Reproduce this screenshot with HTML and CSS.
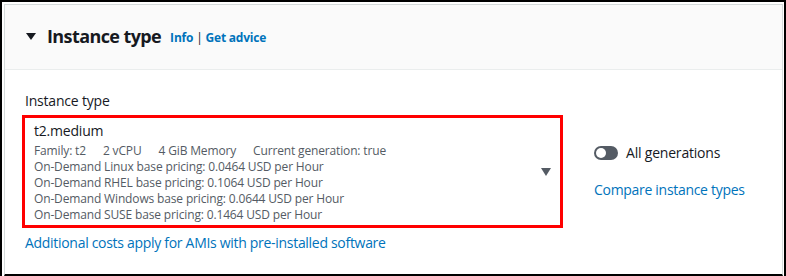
FILE: index.html
```html
<!DOCTYPE html>
<html lang="en">
<head>
    <meta charset="UTF-8">
    <title>Instance type</title>
    <link rel="stylesheet" href="styles.css">
</head>
<body>
    <div class="frame">
        <div class="panel">
            <div class="panel-header">
                <span class="caret-down"></span>
                <h2>Instance type</h2>
                <span class="header-links"><a href="#">Info</a> <span class="sep">|</span> <a href="#">Get advice</a></span>
            </div>

            <div class="panel-body">
                <div class="field-label">Instance type</div>
                <div class="field-row">
                    <div class="select-box">
                        <div class="select-text">
                            <div class="select-title">t2.medium</div>
                            <div class="select-meta">
                                <span>Family: t2</span>
                                <span>2 vCPU</span>
                                <span>4 GiB Memory</span>
                                <span>Current generation: true</span>
                            </div>
                            <div class="select-line">On-Demand Linux base pricing: 0.0464 USD per Hour</div>
                            <div class="select-line">On-Demand RHEL base pricing: 0.1064 USD per Hour</div>
                            <div class="select-line">On-Demand Windows base pricing: 0.0644 USD per Hour</div>
                            <div class="select-line">On-Demand SUSE base pricing: 0.1464 USD per Hour</div>
                        </div>
                        <span class="select-caret"></span>
                    </div>

                    <div class="side">
                        <label class="toggle-row">
                            <span class="toggle"><span class="knob"></span></span>
                            All generations
                        </label>
                        <a href="#" class="link">Compare instance types</a>
                    </div>
                </div>
                <a href="#" class="link extra">Additional costs apply for AMIs with pre-installed software</a>
            </div>
        </div>
    </div>
</body>
</html>
```

FILE: styles.css
```css
html, body {
    margin: 0;
    height: 100%;
}
body {
    font-family: 'Open Sans', sans-serif;
    color: #16191f;
    background-color: white;
}
a {
    color: #0073bb;
    text-decoration: none;
}
.frame {
    box-sizing: border-box;
    height: 276px;
    border: 2px solid #000;
    border-bottom: none;
    padding: 2px 1px 0 2px;
    display: flex;
}
.panel {
    flex: 1;
    border: 1px solid #d5dbdb;
    border-bottom: 2px solid #000;
}
.panel-header {
    height: 64px;
    background-color: #fafafa;
    border-bottom: 1px solid #eaeded;
    display: flex;
    align-items: center;
    padding-left: 21px;
}
.caret-down {
    width: 0;
    height: 0;
    border-left: 5px solid transparent;
    border-right: 5px solid transparent;
    border-top: 7px solid #16191f;
    margin-right: 11px;
    margin-top: -2px;
}
.panel-header h2 {
    margin: 0 0 3px 0;
    font-size: 18px;
    font-weight: 700;
    line-height: 24px;
    letter-spacing: -0.6px;
}
.header-links {
    margin-left: 9px;
    font-size: 12px;
    font-weight: 700;
    letter-spacing: -0.2px;
    padding-top: 1px;
}
.header-links .sep {
    color: #16191f;
    font-weight: 400;
}
.panel-body {
    padding: 21px 20px 0 20px;
}
.field-label {
    font-size: 14px;
    line-height: 20px;
    letter-spacing: -0.2px;
    margin-bottom: 4px;
}
.field-row {
    display: flex;
    align-items: center;
}
.select-box {
    flex: none;
    width: 517px;
    margin-left: -3px;
    border: 3px solid #ff0000;
    padding: 3px 9px 2px 9px;
    display: flex;
    align-items: center;
}
.select-text {
    flex: 1;
}
.select-title {
    font-size: 14px;
    line-height: 20px;
    letter-spacing: -0.2px;
    margin-bottom: 2px;
}
.select-meta, .select-line {
    font-size: 12px;
    line-height: 16px;
    letter-spacing: -0.15px;
    color: #545b64;
}
.select-meta span {
    margin-right: 14px;
}
.select-caret {
    width: 0;
    height: 0;
    border-left: 5px solid transparent;
    border-right: 5px solid transparent;
    border-top: 8px solid #545b64;
}
.side {
    flex: none;
    margin-left: 31px;
    display: flex;
    flex-direction: column;
    gap: 17px;
    white-space: nowrap;
}
.toggle-row {
    display: flex;
    align-items: center;
    font-size: 14px;
    line-height: 20px;
    letter-spacing: -0.2px;
}
.toggle {
    width: 24px;
    height: 14px;
    border-radius: 7px;
    background-color: #545b64;
    margin-right: 8px;
    display: flex;
    align-items: center;
    padding-left: 2px;
    box-sizing: border-box;
}
.knob {
    width: 10px;
    height: 10px;
    border-radius: 50%;
    background-color: white;
}
.link {
    font-size: 14px;
    line-height: 20px;
    letter-spacing: -0.3px;
}
.extra {
    display: block;
    margin-top: 5px;
}
```
